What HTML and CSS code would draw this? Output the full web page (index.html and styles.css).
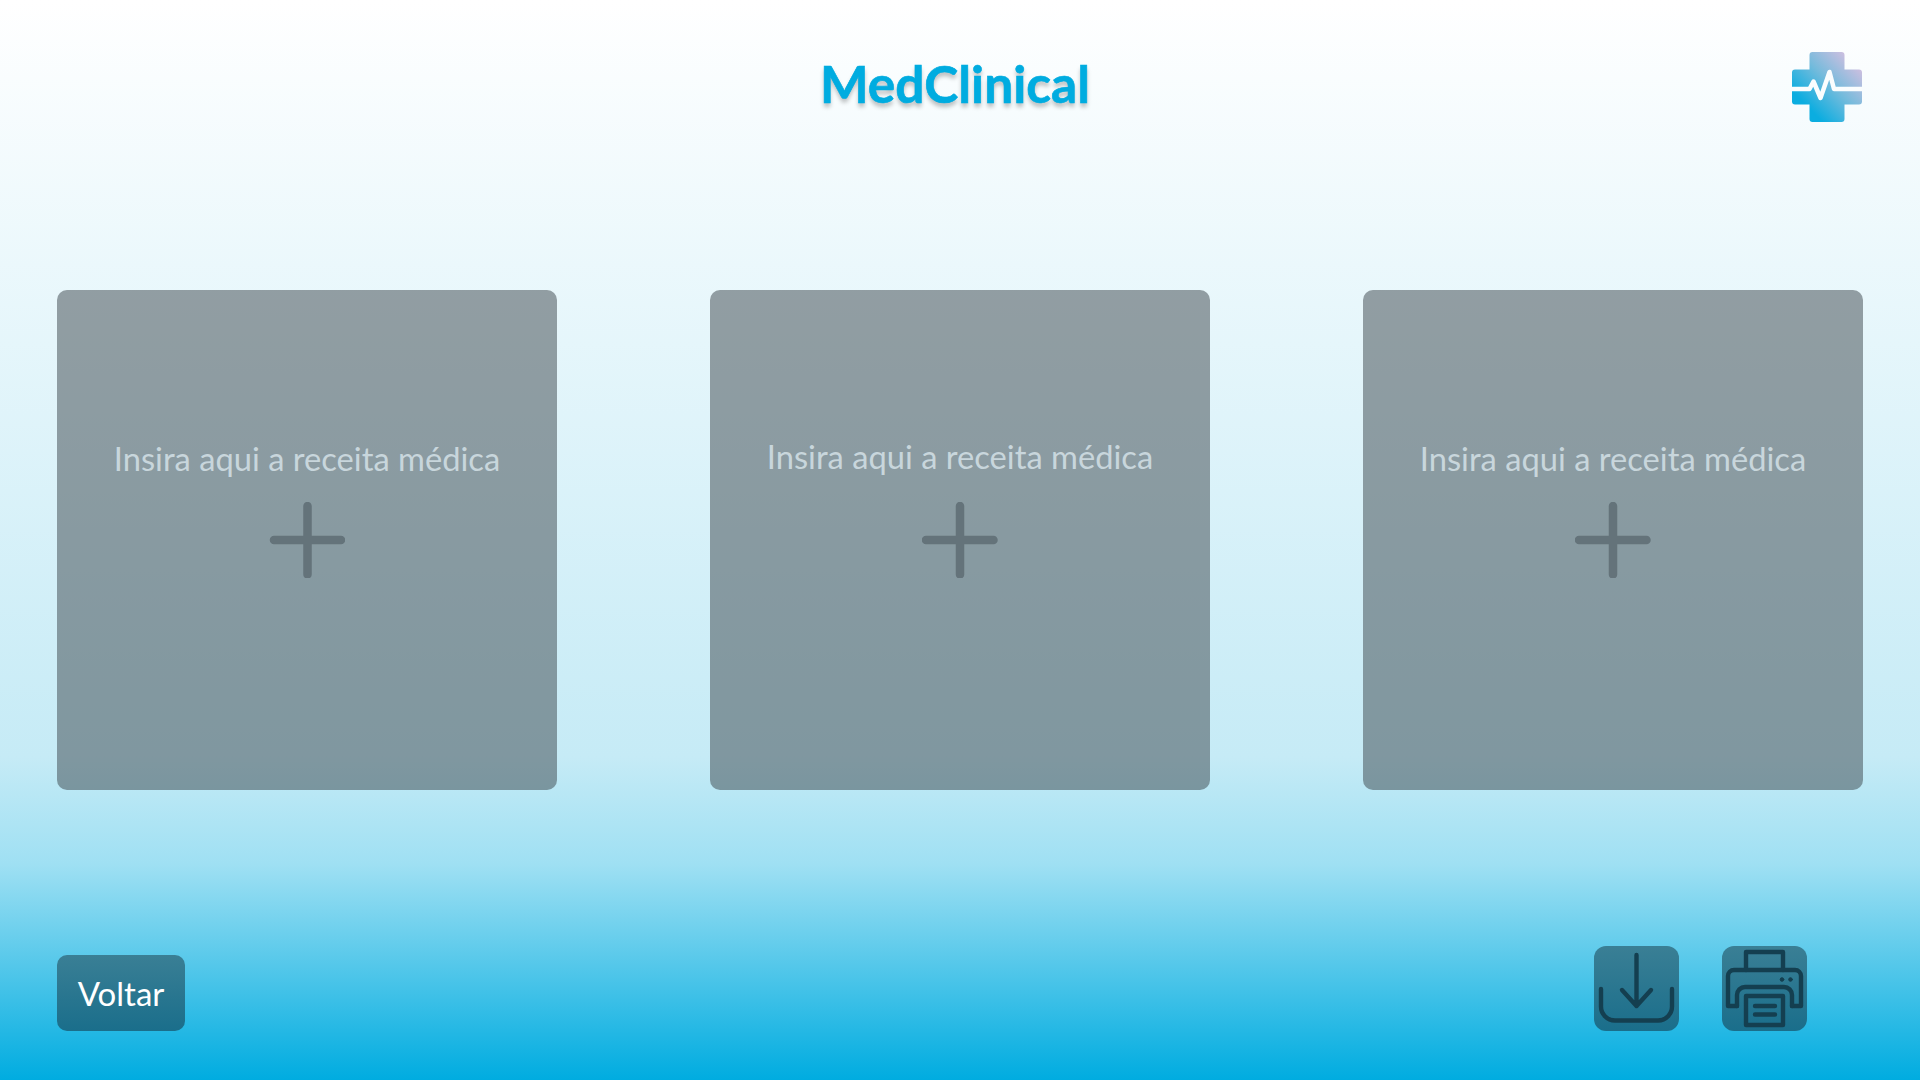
FILE: index.html
```html
<!DOCTYPE html>
<html lang="pt">
<head>
  <meta charset="UTF-8">
  <title>MedClinical</title>
  <link rel="stylesheet" href="styles.css">
</head>
<body>

  <header class="top">
    <h1 class="brand">MedClinical</h1>
    <svg class="logo" width="70" height="70" viewBox="0 0 70 70">
      <defs>
        <linearGradient id="logoGrad" x1="0" y1="1" x2="1" y2="0">
          <stop offset="0.22" stop-color="#0bade0"/>
          <stop offset="0.55" stop-color="#74bbdc"/>
          <stop offset="0.9" stop-color="#d4bfe0"/>
        </linearGradient>
      </defs>
      <path fill="url(#logoGrad)" d="M20.5 0H49.5A3 3 0 0 1 52.5 3V17.5H67A3 3 0 0 1 70 20.5V49.5A3 3 0 0 1 67 52.5H52.5V67A3 3 0 0 1 49.5 70H20.5A3 3 0 0 1 17.5 67V52.5H3A3 3 0 0 1 0 49.5V20.5A3 3 0 0 1 3 17.5H17.5V3A3 3 0 0 1 20.5 0Z"/>
      <path fill="none" stroke="#fafdfe" stroke-width="4.5" stroke-linejoin="round" d="M0 37H17.5L21.5 29.5L28.5 46L37.5 20L42 37H70"/>
    </svg>
  </header>

  <main class="cards">
    <section class="card">
      <p class="card-text">Insira aqui a receita médica</p>
      <svg class="plus" width="76" height="76" viewBox="0 0 76 76">
        <path d="M38.5 4V72.5M5 38H72" fill="none" stroke="#64737a" stroke-width="8.5" stroke-linecap="round"/>
      </svg>
    </section>
    <section class="card card-mid">
      <p class="card-text">Insira aqui a receita médica</p>
      <svg class="plus" width="76" height="76" viewBox="0 0 76 76">
        <path d="M38 4V72.5M4 38H71.5" fill="none" stroke="#64737a" stroke-width="8.5" stroke-linecap="round"/>
      </svg>
    </section>
    <section class="card">
      <p class="card-text">Insira aqui a receita médica</p>
      <svg class="plus" width="76" height="76" viewBox="0 0 76 76">
        <path d="M38 4V72.5M4 38H71.5" fill="none" stroke="#64737a" stroke-width="8.5" stroke-linecap="round"/>
      </svg>
    </section>
  </main>

  <footer class="bottom">
    <button class="btn-back">Voltar</button>
    <div class="actions">
      <button class="btn-icon" aria-label="Baixar">
        <svg width="85" height="85" viewBox="0 0 85 85" fill="none" stroke="#143f50" stroke-width="4.4" stroke-linecap="round" stroke-linejoin="round">
          <path d="M42.5 9V60M28 44L42.5 60L57 44"/>
          <path d="M7 43V60A14 14 0 0 0 21 74.5H64A14 14 0 0 0 78 60V43"/>
        </svg>
      </button>
      <button class="btn-icon" aria-label="Imprimir">
        <svg width="85" height="85" viewBox="0 0 85 85" fill="none" stroke="#143f50" stroke-width="4.4" stroke-linecap="round" stroke-linejoin="round">
          <path d="M24 24V6H61V24"/>
          <path d="M15 60H6V30A6 6 0 0 1 12 24H73A6 6 0 0 1 79 30V60H70"/>
          <path d="M15 60V49A8 8 0 0 1 23 41H62A8 8 0 0 1 70 49V60"/>
          <rect x="24" y="50" width="37" height="29"/>
          <path d="M33 60H53M33 68.5H53"/>
          <circle cx="60" cy="33.5" r="1.8" fill="#143f50" stroke-width="1"/>
          <circle cx="68.5" cy="33.5" r="1.8" fill="#143f50" stroke-width="1"/>
        </svg>
      </button>
    </div>
  </footer>

</body>
</html>
```

FILE: styles.css
```css
* {
  box-sizing: border-box;
}

html, body {
  margin: 0;
  height: 100%;
}

body {
  height: 1080px;
  overflow: hidden;
  display: flex;
  flex-direction: column;
  font-family: "Lato", "Open Sans", sans-serif;
  background: linear-gradient(180deg, #ffffff 0%, #c6ebf6 70%, #9fe0f3 80%, #00ace0 100%);
}

.top {
  height: 290px;
  padding: 52px 58px 0 0;
  display: flex;
  justify-content: flex-end;
  align-items: flex-start;
}

.brand {
  margin: 0 auto 0 820px;
  font-size: 51.5px;
  line-height: 62px;
  font-weight: 700;
  color: #00ace0;
  text-shadow: 0 4px 4px rgba(0, 0, 0, 0.25);
  -webkit-text-stroke: 0.6px #00ace0;
}

.cards {
  padding: 0 57px;
  display: flex;
  justify-content: space-between;
}

.card {
  width: 500px;
  height: 500px;
  padding-top: 149px;
  border-radius: 10px;
  background-color: rgba(58, 68, 74, 0.5);
  display: flex;
  flex-direction: column;
  align-items: center;
}

.card-text {
  margin: 0 0 23px;
  height: 40px;
  font-size: 32.7px;
  line-height: 40px;
  color: #c8d6dc;
}

.card-mid .card-text {
  margin-top: -2px;
  margin-bottom: 25px;
}

.plus {
  display: block;
}

.bottom {
  margin-top: 156px;
  padding: 0 113px 0 57px;
  display: flex;
  justify-content: space-between;
  align-items: flex-end;
}

.btn-back {
  width: 128px;
  height: 76px;
  border: none;
  border-radius: 10px;
  background: linear-gradient(180deg, #3a7f95 0%, #1a6e8b 100%);
  color: #fff;
  font-family: inherit;
  font-size: 33px;
}

.actions {
  display: flex;
  gap: 43px;
}

.btn-icon {
  width: 85px;
  height: 85px;
  padding: 0;
  border: none;
  border-radius: 12px;
  background: linear-gradient(180deg, #3a7f95 0%, #1a6e8b 100%);
}

.btn-icon svg {
  display: block;
}
```
